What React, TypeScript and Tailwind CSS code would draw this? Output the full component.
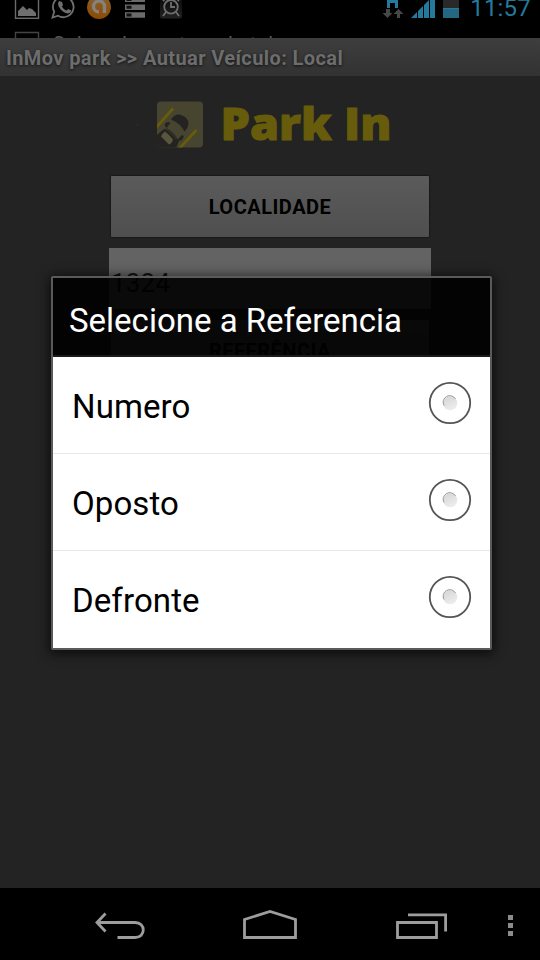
import React from "react";

const options = ["Numero", "Oposto", "Defronte"];

function StatusBar() {
  return (
    <div className="relative h-[38px] overflow-hidden bg-black">
      <svg width="540" height="38" viewBox="0 0 540 38" className="block">
        <defs>
          <linearGradient id="avast" x1="0" y1="0" x2="0" y2="1">
            <stop offset="0" stopColor="#8a6030" />
            <stop offset="1" stopColor="#8c4a00" />
          </linearGradient>
          <linearGradient id="alarm" x1="0" y1="0" x2="0" y2="1">
            <stop offset="0" stopColor="#080808" />
            <stop offset="1" stopColor="#222" />
          </linearGradient>
        </defs>
        <rect x="15.5" y="-6" width="23" height="24.3" fill="none" stroke="#6a6a6a" strokeWidth="1.4" />
        <path d="M18 16v-5l5-5 4 4 2-2 3 1 4 4v3z" fill="#6e6e6e" />
        <path d="M52.500 17.500l1.700-5.800a10.300 10.300 0 1 1 3.800 4z" fill="none" stroke="#6e6e6e" strokeWidth="1.8" />
        <path d="M59 1l3 1 1 3-1 1.500c1 2 2.500 3.200 4.300 4l2-1.500 3 1.500c0 2-2 3-3.500 3C62.500 13 58 7 58 3.500z" fill="#6e6e6e" />
        <circle cx="99" cy="7" r="12" fill="url(#avast)" />
        <path d="M104.500 13V6.500a5.500 5.500 0 1 0-5.500 5.500" fill="none" stroke="#85817c" strokeWidth="3.400" />
        <g fill="#6a6a6a">
          <path d="M125 -4h20V2h-20zM125 4.500h20v5.500h-20zM125 12.200h20v5.600h-20z" />
          <path d="M126.500 5.700h5v3h-5zM126.500 13.500h5v3h-5zM126.500-2h5v3h-5z" fill="#111" />
        </g>
        <rect x="160" y="-4" width="22" height="22.500" rx="2" fill="url(#alarm)" />
        <g fill="none" stroke="#6e6e6e" strokeWidth="1.800">
          <circle cx="171" cy="6.800" r="6.800" />
          <path d="M171 2v5h4M166 12l-3 4M176 12l3 4M163 1l3-3M179 1l-3-3" />
        </g>
        <path d="M15.500 38v-5.500h23V38" fill="none" stroke="#444" strokeWidth="1.400" />
        <path d="M387 0h11v8h-3V3h-5v5h-3z" fill="#247a9c" />
        <path d="M386 9h4v4h2.500l-5 5-5-5h3.500zM397 18v-4h-3.500l5-5 5 5H400v4z" fill="#474747" />
        <path d="M411 18l6-6v6zM418 18v-7l5-5v12zM424 18V5l5-5v18zM430 0h5v18h-5z" fill="#247a9c" />
        <rect x="443" y="0" width="16" height="18" fill="#292929" />
        <rect x="443" y="8" width="16" height="10" fill="#236780" />
        <rect x="443" y="8" width="16" height="1" fill="#247a9c" />
      </svg>
      <div className="absolute top-[-6px] right-[9px] text-[24px] leading-[28px] tracking-[0.200px] text-[#247a9c]">11:57</div>
      <div className="absolute top-[34px] left-[53px] text-[20px] leading-[20px] tracking-[0.550px] text-[#555]">Salvando captura de tela</div>
    </div>
  );
}

function Logo() {
  return (
    <svg width="270" height="60" viewBox="130 95 270 60" className="ml-[130px] mt-[19px] block">
      <defs>
        <clipPath id="tile"><rect x="157" y="101.500" width="46" height="46" rx="4" /></clipPath>
      </defs>
      <g clipPath="url(#tile)">
        <rect x="157" y="101" width="46" height="47" fill="#47442f" />
        <path d="M155 129L173 108.500M179 149l17.500-19" stroke="#675c0b" strokeWidth="2.800" />
        <path d="M157 135l7-6 3 1 12 11-3 7h-19z" fill="#242321" />
        <path d="M161 136.500q1-3 4-5 4 3 8 8-1 4-4 5-4-4-8-8z" fill="#59563e" />
        <path d="M164.500 125q1-3 4-3l2 1-4 5zM179 141l3-1 2-4-2-1-5 5z" fill="#242321" />
        <path d="M171 119.500q3-5 8-5 6 1 9 6 2 5-3.500 11-4-8-13.500-12z" fill="#242321" />
        <path d="M165.500 129q7 3 11 10" fill="none" stroke="#302e25" strokeWidth="2" />
      </g>
      <circle cx="137.500" cy="125" r=".8" fill="#333" />
      <text x="220.500" y="140" textLength="171" lengthAdjust="spacingAndGlyphs" className="fill-[#675c0b] stroke-[#675c0b] font-['Open_Sans',sans-serif] text-[44px] font-extrabold" strokeWidth="1">Park In</text>
    </svg>
  );
}

function Radio() {
  return (
    <svg width="44" height="44" viewBox="0 0 44 44" className="mb-[5px] shrink-0">
      <defs>
        <linearGradient id="dot" x1="0" y1="0" x2="0.500" y2="1">
          <stop offset="0" stopColor="#d4d4d4" />
          <stop offset="1" stopColor="#ececec" />
        </linearGradient>
      </defs>
      <circle cx="22" cy="22" r="20.200" fill="none" stroke="#555" strokeWidth="1.800" />
      <circle cx="22.200" cy="22.200" r="7" fill="url(#dot)" />
      <path d="M16 24.500A6.600 6.600 0 0 1 27.500 18" fill="none" stroke="#999" strokeWidth="1" />
    </svg>
  );
}

function Dialog() {
  return (
    <div className="absolute top-[276px] left-[51px] flex h-[374px] w-[441px] flex-col rounded-[2px] border-2 border-[#5a5a5a] shadow-[0_2px_12px_2px_rgba(0,0,0,0.65)]">
      <div className="flex h-[79px] shrink-0 items-center border-b-2 border-[#1b1b1b] bg-black/90 pl-[16px] pt-[8px] text-[33px] leading-[40px] whitespace-nowrap text-white">
        Selecione a Referencia
      </div>
      <div className="flex-1 bg-white">
        {options.map((o) => (
          <div key={o} className="flex h-[97px] items-center justify-between border-b border-[#e8e8e8] pr-[18px] pl-[19px] text-[33px] text-black last:h-[96px] last:border-b-0">
            <span className="pt-[3px] leading-[40px] tracking-[0.100px]">{o}</span>
            <Radio />
          </div>
        ))}
      </div>
    </div>
  );
}

function NavBar() {
  return (
    <svg width="540" height="72" viewBox="0 888 540 72" className="block bg-black">
      <g fill="none" stroke="#9d9d9d" strokeWidth="2.800">
        <path d="M97 922.500h38c11 0 11 15 0 15h-17.500" />
        <path d="M105.500 913.500l-8.500 9 8.500 9" />
        <path d="M244.500 937.500v-18l25.500-8 25.500 8v18z" />
        <path d="M397.500 922.500h39v15h-39zM408 914.900h37.600v16.600" />
      </g>
      <path d="M508 915h5v5h-5zM508 923h5v5h-5zM508 931h5v5h-5z" fill="#8c8c8c" />
    </svg>
  );
}

export default function App() {
  return (
    <div className="relative flex h-[960px] w-[540px] flex-col overflow-hidden bg-black font-[Roboto,sans-serif]">
      <StatusBar />
      <div className="flex h-[38px] items-center bg-linear-to-b from-[#3e3e3e] to-[#323232] pt-px pl-[6px] text-[20px] font-bold tracking-[0.400px] whitespace-nowrap text-[#6d6d6d] [text-shadow:0_1px_3px_#111]">
        InMov park &gt;&gt; Autuar Veículo: Local
      </div>
      <div className="h-[812px] bg-[#232323]">
        <Logo />
        <div className="mt-[21px] ml-[111px] flex h-[61px] w-[318px] items-center justify-center rounded-[1px] bg-linear-to-b from-[#5b5b5b] to-[#4f4f4f] text-[20px] font-bold tracking-[0.500px] text-black shadow-[0_0_2px_#000]">LOCALIDADE</div>
        <div className="mt-[11px] ml-[109px] h-[61px] w-[322px] bg-[#636363] pt-[16px] pl-[2px] text-[26px] leading-[38px] tracking-[0.200px] text-[#111]">1324</div>
        <div className="mt-[11px] ml-[111px] flex h-[61px] w-[318px] items-center justify-center bg-linear-to-b from-[#5b5b5b] to-[#4f4f4f] text-[20px] font-bold tracking-[0.500px] text-black">REFERÊNCIA</div>
      </div>
      <NavBar />
      <Dialog />
    </div>
  );
}
